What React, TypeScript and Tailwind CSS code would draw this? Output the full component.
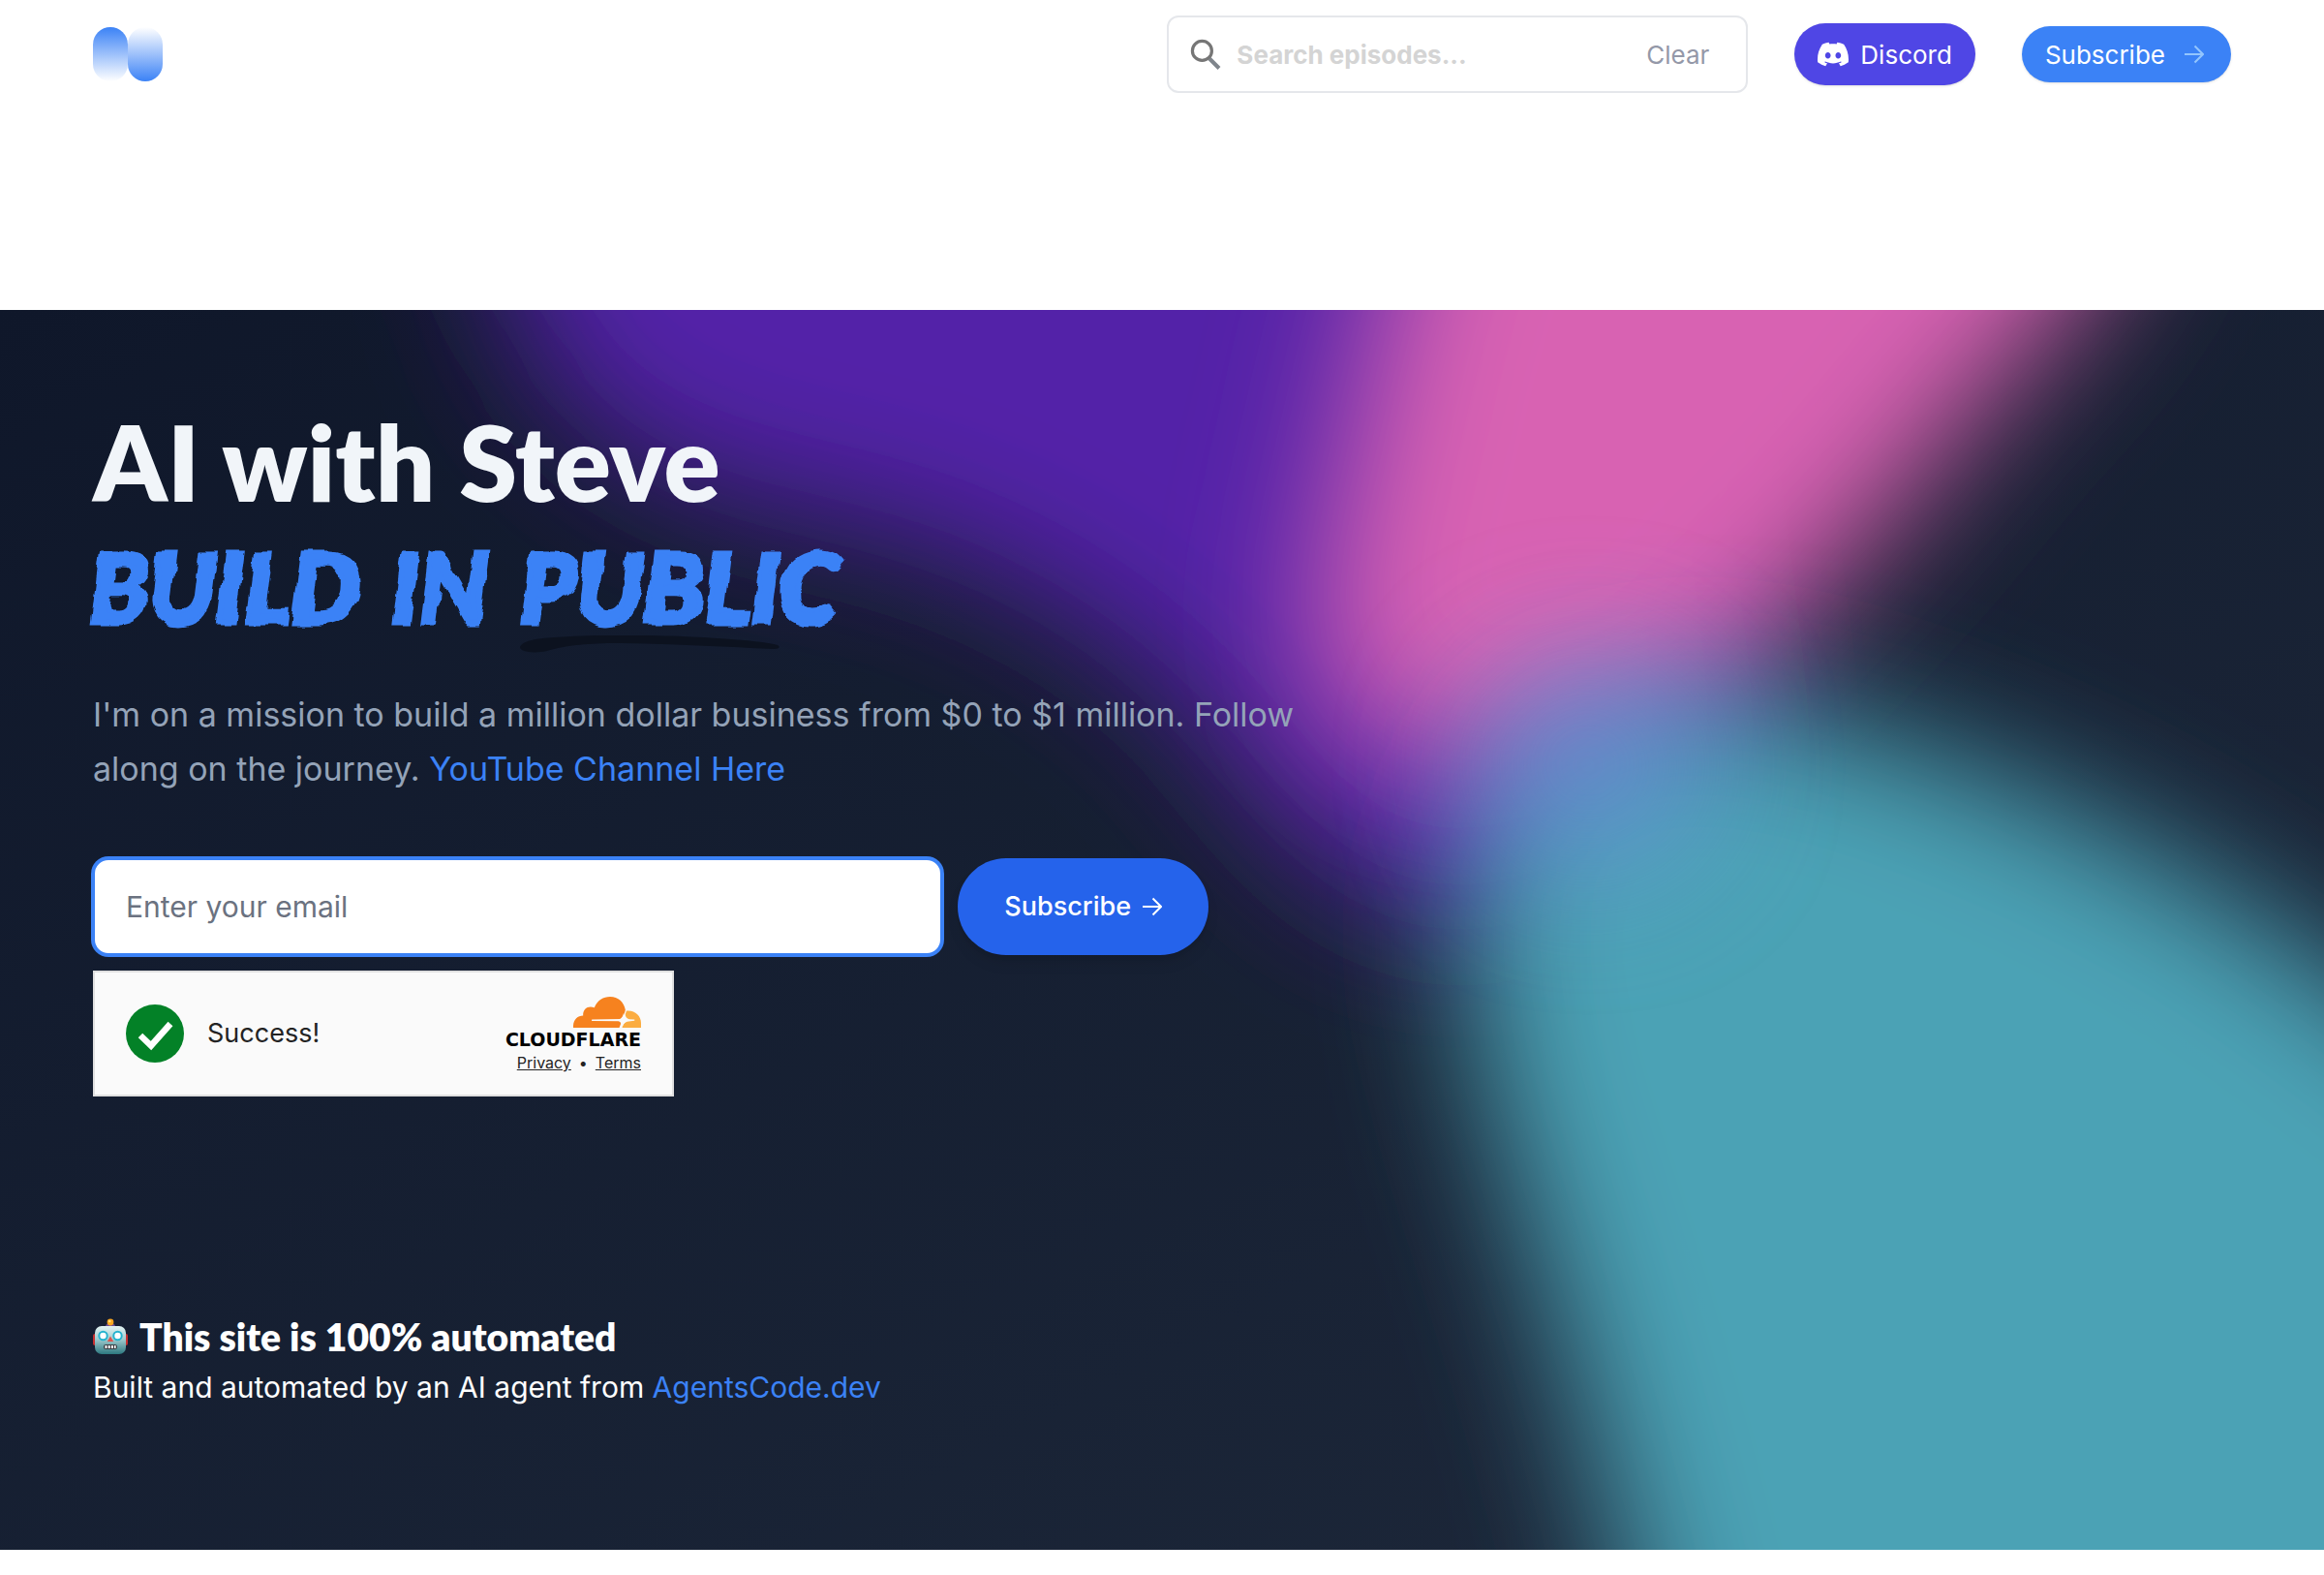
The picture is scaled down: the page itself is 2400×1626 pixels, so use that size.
import React from 'react';
import { SiDiscord } from 'react-icons/si';

function Logo() {
  return (
    <svg viewBox="0 0 72 56" className="h-14 w-[72px]" aria-hidden="true">
      <defs>
        <linearGradient id="logo-down" x1="0" y1="0" x2="0" y2="1">
          <stop offset="0" stopColor="#3b82f6" />
          <stop offset="1" stopColor="#ffffff" />
        </linearGradient>
        <linearGradient id="logo-up" x1="0" y1="1" x2="0" y2="0">
          <stop offset="0" stopColor="#3b82f6" />
          <stop offset="1" stopColor="#ffffff" />
        </linearGradient>
      </defs>
      <rect x="0" y="0" width="36" height="56" rx="18" fill="url(#logo-down)" />
      <rect x="36" y="0" width="36" height="56" rx="18" fill="url(#logo-up)" />
    </svg>
  );
}

function SearchIcon() {
  return (
    <svg viewBox="0 0 32 32" className="h-8 w-8 shrink-0" fill="none" aria-hidden="true">
      <path d="M20 20.5 30 30.5" stroke="#7f858c" strokeWidth="4" />
      <ellipse cx="12.4" cy="12.4" rx="10" ry="10" stroke="#767676" strokeWidth="3.2" />
    </svg>
  );
}

function RobotIcon() {
  return (
    <svg viewBox="0 0 36 38" className="h-[38px] w-9 shrink-0" aria-hidden="true">
      <defs>
        <linearGradient id="robot-face" x1="0" y1="0" x2="0" y2="1">
          <stop offset="0" stopColor="#e4f4f4" />
          <stop offset="0.45" stopColor="#a3cdd0" />
          <stop offset="1" stopColor="#2c7880" />
        </linearGradient>
      </defs>
      <rect x="0" y="16" width="5" height="12" rx="2" fill="#c92f2f" />
      <rect x="31" y="16" width="5" height="12" rx="2" fill="#c92f2f" />
      <path d="M13 9c0-3 2-4 5-4s5 1 5 4z" fill="#6b4b96" />
      <circle cx="18" cy="4" r="3.4" fill="#f9a51f" />
      <circle cx="17.3" cy="3" r="1.3" fill="#ffe27a" />
      <rect x="2" y="8" width="32" height="29" rx="7" fill="url(#robot-face)" />
      <circle cx="10.5" cy="18" r="4.2" fill="#ffffff" stroke="#25b3cf" strokeWidth="2" />
      <circle cx="25.5" cy="18" r="4.2" fill="#ffffff" stroke="#25b3cf" strokeWidth="2" />
      <path d="M18 18.500l3.200 5.500h-6.400z" fill="#e0524c" />
      <rect x="11" y="27" width="14" height="5" rx="2.200" fill="#3a3d42" />
      <path d="M12.500 28h2v3h-2zM15.700 28h2v3h-2zM18.900 28h2v3h-2zM22 28h1.600v3H22z" fill="#ffffff" />
    </svg>
  );
}

function CloudflareCloud() {
  return (
    <svg viewBox="0 0 70 32" className="h-8 w-[70px]" aria-hidden="true">
      <path
        d="M0 32C-.5 24.500 4 19.700 10.200 19.600 9.600 13 15 8.500 21.800 11.200 25 3.500 31 0 38 0c8.500 0 14.500 5.800 15.800 13.500-.3 2.200-1.300 4.500-3 8.300-.4.900-1 1.300-2 1.300L19.500 23.400c-.7 0-.7 1.500 0 1.500l27 .3c2.300.1 3 1.700 2.300 3.600L47.500 32z"
        fill="#f6821f"
      />
      <path
        d="M55 14.500C63.500 13.500 70 19.500 70 27v5H50.500c.3-3 2-5.300 5-6.300l7.500-.9c.6-.1.600-1.200 0-1.300l-5-.3c-3-.5-4.300-2.700-4.200-5.200z"
        fill="#fbad41"
      />
      <path d="M52 17c.8 4.500 2.500 6.500 7 7.300-4.500.8-6.800 2.800-8.300 7.200-.4-4.400-2-6.400-6.200-7.200 4.500-.8 6.500-2.800 7.500-7.300z" fill="#fafafa" />
    </svg>
  );
}

function Arrow({ className }: { className: string }) {
  return (
    <svg viewBox="0 0 20 20" className={className} fill="none" stroke="currentColor" strokeWidth="2" aria-hidden="true">
      <path d="M0 10h18.500M10.500 1.500 19 10l-8.500 8.500" />
    </svg>
  );
}

function Backdrop() {
  return (
    <svg
      viewBox="0 0 2400 1280"
      preserveAspectRatio="xMidYMid slice"
      className="absolute inset-0 -z-10 h-full w-full"
      aria-hidden="true"
    >
      <defs>
        <filter id="soft" filterUnits="userSpaceOnUse" x="-400" y="-600" width="3400" height="2600">
          <feGaussianBlur stdDeviation="72" />
        </filter>
        <filter id="marker" x="-5%" y="-10%" width="110%" height="120%">
          <feTurbulence type="fractalNoise" baseFrequency="0.05" numOctaves="2" seed="4" result="noise" />
          <feDisplacementMap in="SourceGraphic" in2="noise" scale="9" xChannelSelector="R" yChannelSelector="G" />
        </filter>
      </defs>
      <g filter="url(#soft)">
        <path
          d="M480-300 525 0C590 150 700 190 900 225 1060 270 1180 350 1260 450 1340 570 1420 630 1540 630L1800 500 1700-300z"
          fill="#5324a8"
        />
      </g>
      <g filter="url(#soft)">
        <path
          d="M1540-300C1460-150 1420 0 1400 110 1370 240 1330 340 1385 420 1440 480 1640 500 1740 420 1850 330 1960 210 2020 130 2070 70 2100 40 2150-10L2300-300z"
          fill="#d862b2"
        />
      </g>
      <g filter="url(#soft)">
        <path
          d="M1530 530C1560 420 1700 375 1840 410 1990 445 2210 530 2420 690L2900 1050V1700H1770C1730 1500 1660 1200 1590 980 1520 760 1490 660 1530 530z"
          fill="#4ba2b5"
        />
      </g>
      <g filter="url(#soft)" opacity="0.65">
        <ellipse cx="1640" cy="470" rx="120" ry="110" fill="#6a8fdc" />
      </g>
    </svg>
  );
}

export default function App() {
  return (
    <div className="bg-white font-[Inter,sans-serif]">
      <header className="flex h-28 items-center justify-between px-24">
        <a href="#" aria-label="Home">
          <Logo />
        </a>
        <nav className="flex items-center gap-12">
          <form className="flex h-20 w-[600px] items-center rounded-xl border-2 border-gray-200 px-[22px]">
            <SearchIcon />
            <input
              type="search"
              aria-label="Search episodes"
              placeholder="Search episodes..."
              className="ml-4 min-w-0 flex-1 text-[26px] font-bold outline-none placeholder:text-[#d4d4d4]"
            />
            <button type="reset" className="mr-4 text-[26px] text-[#9498a8]">
              Clear
            </button>
          </form>
          <a
            href="#discord"
            className="flex h-16 items-center gap-3 rounded-full bg-[#4f46e5] px-6 text-[26px] text-white shadow-sm"
          >
            <SiDiscord className="h-8 w-8" aria-hidden="true" />
            Discord
          </a>
          <a
            href="#subscribe"
            className="flex h-[58px] items-center gap-5 rounded-full bg-[#3b82f6] px-6 text-[26px] text-white shadow-sm"
          >
            Subscribe
            <Arrow className="mr-1 h-5 w-5 text-[#93c5fd]" />
          </a>
        </nav>
      </header>

      <main className="relative isolate mt-52 overflow-hidden bg-linear-to-br from-[#0f172a] to-[#1e293b] px-24 pt-24 pb-36">
        <Backdrop />
        <h1 className="font-[Lato,sans-serif]">
          <span className="block text-[108px] leading-[120px] font-extrabold text-[#f1f5f9]">AI with Steve</span>
          <span className="mt-2 -ml-1 flex gap-8 text-[100px] leading-[120px] font-black text-[#3b82f6] italic [-webkit-text-stroke:5px_#3b82f6]">
            <span className="[filter:url(#marker)]">BUILD</span> <span className="[filter:url(#marker)]">IN</span>{' '}
            <span className="relative">
              <span className="block [filter:url(#marker)]">PUBLIC</span>
              <svg viewBox="0 0 268 18" className="absolute top-28 left-0 h-[18px] w-[268px]" aria-hidden="true">
                <path
                  d="M0 12C2 6 16 3 36 2 90-2 150 0 190 2c28 2 60 4 76 8 3 2 2 4-4 4C200 11 140 8 90 8 60 9 45 11 28 16 14 19 0 17 0 12z"
                  fill="#0c121f"
                />
              </svg>
            </span>
          </span>
        </h1>
        <p className="mt-[46px] max-w-7xl text-[34px] leading-[56px] text-[#94a3b8]">
          I'm on a mission to build a million dollar business from $0 to $1 million. Follow along on the journey.{' '}
          <a href="#youtube" className="text-[#3b82f6]">
            YouTube Channel Here
          </a>
        </p>

        <form className="mt-16 flex max-w-6xl flex-wrap gap-4">
          <input
            type="email"
            aria-label="Email address"
            placeholder="Enter your email"
            className="h-[100px] min-w-0 flex-1 rounded-2xl border-2 border-[#3b82f6] bg-white px-8 text-[30px] text-gray-900 ring-2 ring-[#3b82f6] outline-none placeholder:text-[#6b7280]"
          />
          <button
            type="submit"
            className="flex h-[100px] items-center gap-3 rounded-full bg-[#2563eb] px-12 text-[27px] font-medium text-white shadow-lg"
          >
            Subscribe
            <Arrow className="h-5 w-5" />
          </button>
          <div className="basis-full">
            <div className="flex h-[130px] w-[600px] items-center border-2 border-[#e0e0e0] bg-[#fafafa] px-8">
              <svg viewBox="0 0 60 60" className="h-[60px] w-[60px]" aria-hidden="true">
                <circle cx="30" cy="30" r="30" fill="#038127" />
                <path d="m15 32 11 10.500L46 20" fill="none" stroke="#ffffff" strokeWidth="6.500" />
              </svg>
              <span className="ml-6 text-[27px] text-[#232323]">Success!</span>
              <div className="ml-auto flex flex-col items-end pt-1">
                <CloudflareCloud />
                <span className="mt-1 font-['DejaVu_Sans',sans-serif] text-[19px] leading-4 font-bold text-black">
                  CLOUDFLARE
                </span>
                <div className="mt-1 flex gap-2 text-[16px] leading-6 text-[#232323]">
                  <a href="#privacy" className="underline">
                    Privacy
                  </a>
                  <span>•</span>
                  <a href="#terms" className="underline">
                    Terms
                  </a>
                </div>
              </div>
            </div>
          </div>
        </form>

        <section className="mt-55 text-white">
          <h2 className="flex items-center gap-3 font-[Lato,sans-serif] text-[39px] leading-[56px] font-extrabold">
            <RobotIcon />
            This site is 100% automated
          </h2>
          <p className="text-[30px] leading-[48px]">
            Built and automated by an AI agent from{' '}
            <a href="#agents" className="text-[#3b82f6]">
              AgentsCode.dev
            </a>
          </p>
        </section>
      </main>
    </div>
  );
}
